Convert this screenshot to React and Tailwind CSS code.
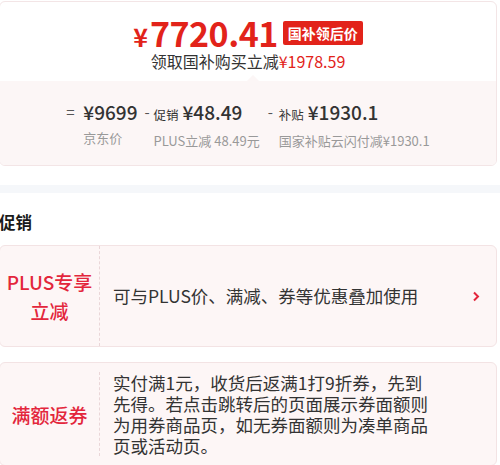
const RED = 'text-[#e2231a]';

function PriceCard() {
  return (
    <div className="pt-px">
      <div className="-ml-px w-[498px] h-[165px] border border-[#f3e5e6] rounded-[6px] overflow-hidden flex flex-col">
        <div className="h-[79px] flex flex-col items-center pt-[13px]">
          <div className="flex items-center h-[36px]">
            <span className={`${RED} font-bold flex items-baseline leading-none`}>
              <span className="text-[25px] mr-[2px]">¥</span>
              <span className="text-[34px] tracking-[-0.5px]">7720.41</span>
            </span>
            <span className="ml-[5px] h-[24px] px-[5px] flex items-center bg-[#e2231a] text-white text-[14px] font-bold rounded-[2px] leading-none">
              国补领后价
            </span>
          </div>
          <div className="text-[16px] leading-[20px] text-[#333]">
            领取国补购买立减<span className={RED}>¥1978.59</span>
          </div>
        </div>
        <div className="relative flex-1 bg-[#fcf6f6] flex justify-center pt-[19px]">
          <div className="absolute -top-[6px] left-[247px] w-0 h-0 border-x-[6px] border-x-transparent border-b-[6px] border-b-[#fcf6f6]" />
          <div className="flex">
            <div className="flex">
              <span className="w-[17px] text-[15px] leading-[24px] text-[#555]">=</span>
              <div className="flex flex-col">
                <span className="text-[19px] leading-[24px] font-medium text-[#333]">¥9699</span>
                <span className="mt-[5px] text-[13px] leading-[18px] text-[#999]">京东价</span>
              </div>
            </div>
            <div className="flex ml-[7px]">
              <span className="w-[9px] text-[15px] leading-[24px] text-[#555]">-</span>
              <div className="flex flex-col">
                <span className="leading-[24px] text-[#333] flex items-baseline">
                  <span className="text-[12.5px] mr-[4px]">促销</span>
                  <span className="text-[19px] font-medium">¥48.49</span>
                </span>
                <span className="mt-[5px] text-[13px] leading-[18px] text-[#999]">PLUS立减 48.49元</span>
              </div>
            </div>
            <div className="flex ml-[8px]">
              <span className="w-[11px] text-[15px] leading-[24px] text-[#555]">-</span>
              <div className="flex flex-col">
                <span className="leading-[24px] text-[#333] flex items-baseline">
                  <span className="text-[12.5px] mr-[4px]">补贴</span>
                  <span className="text-[19px] font-medium">¥1930.1</span>
                </span>
                <span className="mt-[5px] text-[13px] leading-[18px] text-[#999]">国家补贴云闪付减¥1930.1</span>
              </div>
            </div>
          </div>
        </div>
      </div>
    </div>
  );
}

function PromoCard({ label, children, arrow, className = '' }) {
  return (
    <div className={`-ml-px w-[498px] flex border border-[#f3e3e4] bg-[#fdf6f6] rounded-[6px] ${className}`}>
      <div className="w-[100px] shrink-0 flex items-center justify-center border-r border-dashed border-[#ead6d8]">
        <div className="text-center text-[19px] leading-[29px] font-medium text-[#e3263c]">{label}</div>
      </div>
      <div className="flex-1 flex items-center pl-[13px] pr-[16px]">
        <div className="flex-1 text-[17.5px] text-[#333]">{children}</div>
        {arrow && (
          <svg width="8" height="11" viewBox="0 0 8 11" className="shrink-0">
            <polyline points="2,1.5 6,5.5 2,9.5" fill="none" stroke="#e3263c" strokeWidth="2" />
          </svg>
        )}
      </div>
    </div>
  );
}

export default function App() {
  return (
    <div className="w-[500px] h-[465px] overflow-hidden bg-white font-['Noto_Sans_CJK_SC','Noto_Sans',sans-serif]">
      <PriceCard />
      <div className="mt-[19px] h-[8px] bg-[#f5f7fa]" />
      <div className="mt-[17px] -ml-px text-[16.5px] leading-[24px] font-bold text-[#1a1a1a]">促销</div>
      <PromoCard className="mt-[11px] h-[102px]" arrow label={<>PLUS专享<br />立减</>}>
        可与PLUS价、满减、券等优惠叠加使用
      </PromoCard>
      <PromoCard className="mt-[15px] py-[9px]" label="满额返券">
        <div className="w-[322px] leading-[21px]">
          实付满1元，收货后返满1打9折券，先到先得。若点击跳转后的页面展示券面额则为用券商品页，如无券面额则为凑单商品页或活动页。
        </div>
      </PromoCard>
    </div>
  );
}
